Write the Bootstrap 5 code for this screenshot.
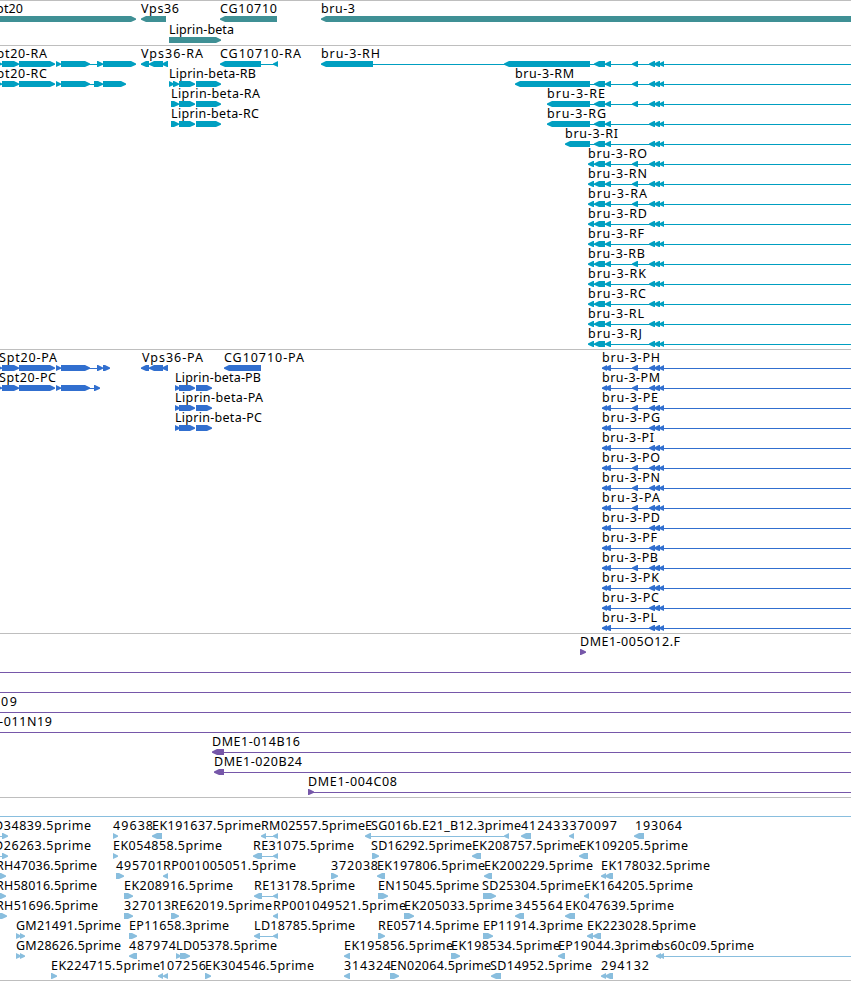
<!DOCTYPE html>
<html lang="en">
<head>
<meta charset="utf-8">
<title>Genome tracks</title>
<link href="https://cdn.jsdelivr.net/npm/bootstrap@5.3.0/dist/css/bootstrap.min.css" rel="stylesheet">
<style>
body{background:#fff}
.track{border-top:1px solid #bebebe;padding-bottom:3px;color:var(--ink)}
.track:first-child,.track.last-track{padding-bottom:2px}
.track-row{display:block;width:100%;height:20px;overflow:visible}
.track:first-child .track-row{height:21px}
.track.last-track{border-bottom:1px solid #bebebe}
.track text{fill:#000;font:12.5px "Noto Sans","DejaVu Sans",sans-serif;white-space:pre}
.track polygon{fill:var(--ink)}
.track rect{fill:var(--ink);shape-rendering:crispEdges}
</style>
<script src="https://cdn.jsdelivr.net/npm/bootstrap@5.3.0/dist/js/bootstrap.bundle.min.js"></script>
</head>
<body class="m-0 overflow-hidden">
<main id="tracks" class="d-flex flex-column w-100"></main>
<script>
// Row syntax: items separated by ";".
// "T start end label" | "R start end" | "L start end" | "- start end"
const spt='R -4 2;R 2 19;R 19 55;R 56 61;R 61 90;- 88 98;';
const vps='L 141 149;L 149 163;L 162 168;- 141 168;';
const bruLine='- 590 860;L 594 605;L 605 611;L 649 655;L 654 660;L 659 664;';
const mid='L 632 638;';
const bruP='- 602 860;L 602 607;L 605 611;L 649 655;L 654 660;L 659 664;';
const shortR=(n,e,m)=>'T 588 '+e+' bru-3-'+n+';L 588 594;'+bruLine+(m?mid:'');
const prot=(n,e,m)=>'T 602 '+e+' bru-3-'+n+';'+bruP+(m?mid:'');
const tracks=[
{ink:'#3f9095',rows:[
'T -11 23 Spt20;R -10 136;T 141 179 Vps36;L 141 166;T 220 277 CG10710;L 220 277;T 321 355 bru-3;L 321 870',
'T 169 234 Liprin-beta;R 169 221']},
{ink:'#009fc1',rows:[
'T -11 47 Spt20-RA;'+spt+'R 97 103;R 103 136;T 141 203 Vps36-RA;'+vps+'T 220 301 CG10710-RA;L 220 261;- 261 278;L 273 278;T 321 380 bru-3-RH;L 321 373;- 373 506;L 504 590;'+bruLine+mid,
'T -11 47 Spt20-RC;'+spt+'R 94 103;R 103 126;T 169 256 Liprin-beta-RB;R 169 174;R 173 179;R 179 195;R 196 221;T 515 574 bru-3-RM;L 515 590;'+bruLine+mid,
'T 171 260 Liprin-beta-RA;R 171 179;R 179 195;R 196 221;T 547 605 bru-3-RE;L 547 590;'+bruLine+mid,
'T 171 259 Liprin-beta-RC;R 171 179;R 179 195;R 196 221;T 547 606 bru-3-RG;L 547 590;'+bruLine,
'T 565 618 bru-3-RI;L 565 590;'+bruLine,
shortR('RO',647,1),shortR('RN',647,1),shortR('RA',647,1),shortR('RD',647,0),shortR('RF',644,0),shortR('RB',645,1),shortR('RK',646,0),shortR('RC',646,0),shortR('RL',644,0),shortR('RJ',642,0)]},
{ink:'#316fcf',rows:[
'T -1 57 Spt20-PA;'+spt+'R 97 103;R 103 110;T 142 203 Vps36-PA;'+vps+'T 224 304 CG10710-PA;L 224 261;'+prot('PH',660,1),
'T -1 56 Spt20-PC;'+spt+'R 94 100;T 175 261 Liprin-beta-PB;R 175 180;R 179 195;R 196 212;'+prot('PM',660,1),
'T 175 263 Liprin-beta-PA;R 175 180;R 179 195;R 196 212;'+prot('PE',658,1),
'T 175 262 Liprin-beta-PC;R 175 180;R 179 195;R 196 212;'+prot('PG',660,0),
prot('PI',654,0),prot('PO',660,1),prot('PN',660,1),prot('PA',660,1),prot('PD',660,0),prot('PF',657,0),prot('PB',658,1),prot('PK',659,0),prot('PC',659,0),prot('PL',657,0)]},
{ink:'#7657a9',rows:[
'T 580 680 DME1-005O12.F;R 580 586','- 0 860','- 0 860','T 1 17 09;- 0 860','T -1 52 -011N19;- 0 860',
'T 212 300 DME1-014B16;L 212 224;- 224 860','T 214 302 DME1-020B24;L 214 224;- 224 860','T 308 397 DME1-004C08;R 308 314;- 310 860']},
{ink:'#89bede',last:true,rows:[
'- 0 860',
'T -6 91 D34839.5prime;R 2 8;- 0 3;T 113 153 49638;R 113 118;T 152 261 EK191637.5prime;L 152 162;T 261 365 RM02557.5prime;L 261 266;- 266 273;L 273 278;T 365 373 E;T 371 521 SG016b.E21_B12.3prime;L 365 371;- 371 504;L 504 509;T 521 617 412433370097;L 521 531;L 569 574;T 635 682 193064;L 634 644',
'T -6 91 D26263.5prime;R 2 8;- 0 3;T 113 222 EK054858.5prime;R 113 118;T 253 354 RE31075.5prime;L 253 262;- 262 273;L 273 278;T 371 472 SD16292.5prime;R 372 379;T 472 580 EK208757.5prime;L 472 481;T 579 688 EK109205.5prime;L 579 588',
'T -4 97 RH47036.5prime;R -4 6;T 116 163 495701;R 116 124;T 163 296 RP001005051.5prime;L 163 168;T 331 378 372038;R 331 338;T 377 485 EK197806.5prime;L 377 385;T 484 593 EK200229.5prime;L 484 492;T 601 710 EK178032.5prime;L 601 606;L 605 613',
'T -4 97 RH58016.5prime;R -4 6;T 124 233 EK208916.5prime;R 124 133;T 254 355 RE13178.5prime;L 254 262;- 262 273;L 273 278;T 378 479 EN15045.5prime;R 378 388;T 482 584 SD25304.5prime;R 483 496;T 584 693 EK164205.5prime;L 584 589',
'T -4 98 RH51696.5prime;R -3 7;T 124 171 327013;R 124 133;T 171 272 RE62019.5prime;R 171 179;T 273 406 RP001049521.5prime;L 273 278;T 404 513 EK205033.5prime;R 404 414;T 515 563 345564;L 515 524;T 565 674 EK047639.5prime;L 565 575',
'T 16 121 GM21491.5prime;R 16 21;R 20 25;T 129 229 EP11658.3prime;R 129 137;T 254 355 LD18785.5prime;L 254 260;- 260 273;L 273 278;T 378 479 RE05714.5prime;R 378 385;T 483 583 EP11914.3prime;R 483 493;T 587 696 EK223028.5prime;L 587 593;- 592 595;L 593 601',
'T 16 121 GM28626.5prime;R 16 21;R 20 25;T 129 176 487974;L 129 137;T 176 277 LD05378.5prime;R 176 181;R 180 190;T 344 453 EK195856.5prime;L 344 350;T 451 560 EK198534.5prime;R 451 460;T 558 658 EP19044.3prime;L 558 565;T 656 754 bs60c09.5prime;L 656 661;L 659 664;- 663 860',
'T 51 160 EK224715.5prime;R 51 57;T 159 206 107256;L 158 163;L 163 168;T 205 314 EK304546.5prime;R 205 211;T 344 391 314324;L 344 350;T 390 491 EN02064.5prime;R 390 399;T 490 592 SD14952.5prime;L 491 501;T 601 649 294132;L 601 606;L 605 613']}
];
const NS='http://www.w3.org/2000/svg';
function add(svg,tag,attrs){const e=document.createElementNS(NS,tag);for(const k in attrs)e.setAttribute(k,attrs[k]);svg.appendChild(e);return e}
for(const t of tracks){
  const s=document.createElement('section');
  s.className='track w-100'+(t.last?' last-track':'');
  s.style.setProperty('--ink',t.ink);
  for(const r of t.rows){
    const svg=document.createElementNS(NS,'svg');
    svg.setAttribute('class','track-row');
    const labels=[];
    for(const item of r.split(';')){
      if(!item)continue;
      const [k,x0,x1,label]=item.split(' ');
      const a=+x0,b=+x1;
      if(k==='T')labels.push([a,b,label]);
      else if(k==='-')add(svg,'rect',{x:a,y:18,width:b-a,height:1});
      else{
        const n=Math.min(5,b-a);
        add(svg,'polygon',{points:k==='R'?`${a},15 ${b-n},15 ${b},17.5 ${b},18.7 ${b-n},21 ${a},21`:`${b},15 ${a+n},15 ${a},17.5 ${a},18.7 ${a+n},21 ${b},21`});
      }
    }
    for(const [a,b,label] of labels)add(svg,'text',{x:a,y:12,textLength:b-a,lengthAdjust:'spacing'}).textContent=label;
    s.appendChild(svg);
  }
  document.getElementById('tracks').appendChild(s);
}
</script>
</body>
</html>
